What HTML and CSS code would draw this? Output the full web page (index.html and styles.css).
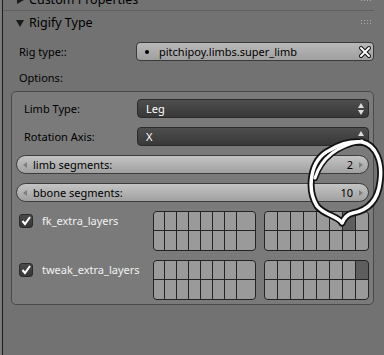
FILE: index.html
```html
<!DOCTYPE html>
<html lang="en">
<head>
  <meta charset="UTF-8">
  <title>Rigify Type</title>
  <link rel="stylesheet" href="styles.css">
</head>
<body>
  <div class="area">
    <div class="edge"></div>
    <div class="panels">
      <div class="panel-head cut">
        <svg class="tri" width="8" height="8" viewBox="0 0 8 8"><polygon points="1,0 8,4 1,8" fill="#1a1a1a"/></svg>
        <span class="title">Custom Properties</span>
        <svg class="grip" width="11" height="5" viewBox="0 0 11 5"><g fill="#aaa"><rect x="0" y="0" width="1" height="1"/><rect x="3" y="0" width="1" height="1"/><rect x="6" y="0" width="1" height="1"/><rect x="9" y="0" width="1" height="1"/><rect x="0" y="3" width="1" height="1"/><rect x="3" y="3" width="1" height="1"/><rect x="6" y="3" width="1" height="1"/><rect x="9" y="3" width="1" height="1"/></g></svg>
      </div>
      <div class="panel-head">
        <svg class="tri" width="8" height="8" viewBox="0 0 8 8"><polygon points="0,1 8,1 4,8" fill="#1a1a1a"/></svg>
        <span class="title">Rigify Type</span>
        <svg class="grip" width="11" height="5" viewBox="0 0 11 5"><g fill="#aaa"><rect x="0" y="0" width="1" height="1"/><rect x="3" y="0" width="1" height="1"/><rect x="6" y="0" width="1" height="1"/><rect x="9" y="0" width="1" height="1"/><rect x="0" y="3" width="1" height="1"/><rect x="3" y="3" width="1" height="1"/><rect x="6" y="3" width="1" height="1"/><rect x="9" y="3" width="1" height="1"/></g></svg>
      </div>

      <div class="prop-row rig">
        <span class="label">Rig type::</span>
        <div class="field">
          <span class="bullet"></span>
          <span class="value">pitchipoy.limbs.super_limb</span>
          <svg class="clear" width="14" height="14" viewBox="0 0 14 14">
            <path d="M3 3 L11 11 M11 3 L3 11" stroke="#111" stroke-width="4" stroke-linecap="round"/>
            <path d="M3 3 L11 11 M11 3 L3 11" stroke="#fff" stroke-width="2" stroke-linecap="round"/>
          </svg>
        </div>
      </div>
      <div class="prop-row options">
        <span class="label">Options:</span>
      </div>

      <div class="box">
        <div class="box-row">
          <span class="label">Limb Type:</span>
          <div class="menu">
            <span>Leg</span>
            <svg class="updown" width="6" height="12" viewBox="0 0 6 12"><polygon points="3,0 6,5 0,5" fill="#ddd"/><polygon points="0,7 6,7 3,12" fill="#ddd"/></svg>
          </div>
        </div>
        <div class="box-row">
          <span class="label">Rotation Axis:</span>
          <div class="menu">
            <span>X</span>
            <svg class="updown" width="6" height="12" viewBox="0 0 6 12"><polygon points="3,0 6,5 0,5" fill="#ddd"/><polygon points="0,7 6,7 3,12" fill="#ddd"/></svg>
          </div>
        </div>
        <div class="box-row">
          <div class="slider">
            <svg class="arr" width="4" height="6" viewBox="0 0 4 6"><polygon points="4,0 4,6 0,3" fill="#7d7d7d"/></svg>
            <span class="name">limb segments:</span>
            <span class="num">2</span>
            <svg class="arr" width="4" height="6" viewBox="0 0 4 6"><polygon points="0,0 4,3 0,6" fill="#7d7d7d"/></svg>
          </div>
        </div>
        <div class="box-row">
          <div class="slider">
            <svg class="arr" width="4" height="6" viewBox="0 0 4 6"><polygon points="4,0 4,6 0,3" fill="#7d7d7d"/></svg>
            <span class="name">bbone segments:</span>
            <span class="num">10</span>
            <svg class="arr" width="4" height="6" viewBox="0 0 4 6"><polygon points="0,0 4,3 0,6" fill="#7d7d7d"/></svg>
          </div>
        </div>

        <div class="layer-row">
          <div class="layer-left">
            <span class="check"><svg width="12" height="12" viewBox="0 0 12 12"><path d="M2.5 6 L5 9 L10 2" stroke="#fff" stroke-width="2" fill="none"/></svg></span>
            <span class="check-label">fk_extra_layers</span>
          </div>
          <div class="layers first">
            <i></i><i></i><i></i><i></i><i></i><i></i><i></i><i></i>
            <i></i><i></i><i></i><i></i><i></i><i></i><i></i><i></i>
          </div>
          <div class="layers second">
            <i></i><i></i><i></i><i></i><i></i><i></i><i class="on"></i><i></i>
            <i></i><i></i><i></i><i></i><i></i><i></i><i></i><i></i>
          </div>
        </div>
        <div class="layer-row">
          <div class="layer-left">
            <span class="check"><svg width="12" height="12" viewBox="0 0 12 12"><path d="M2.5 6 L5 9 L10 2" stroke="#fff" stroke-width="2" fill="none"/></svg></span>
            <span class="check-label">tweak_extra_layers</span>
          </div>
          <div class="layers first">
            <i></i><i></i><i></i><i></i><i></i><i></i><i></i><i></i>
            <i></i><i></i><i></i><i></i><i></i><i></i><i></i><i></i>
          </div>
          <div class="layers second">
            <i></i><i></i><i></i><i></i><i></i><i></i><i></i><i class="on"></i>
            <i></i><i></i><i></i><i></i><i></i><i></i><i></i><i></i>
          </div>
        </div>
      </div>
    </div>
  </div>

  <!-- hand drawn circle round the numbers -->
  <svg class="annot" width="384" height="355" viewBox="0 0 384 355">
    <g fill="none" stroke-linecap="round" stroke-linejoin="round">
      <path id="loop" d="M342 223 C338 216 324 215 317 206 C307 190 309 160 330 150 C340 144 352 141 362 142 C376 145 383 162 380 182 C378 199 369 210 353 213 C348 214 344 218 342 223" stroke="#111" stroke-width="7"/>
      <path d="M315 178 C322 156 340 145 362 141" stroke="#111" stroke-width="6"/>
      <path d="M342 223 C338 216 324 215 317 206 C307 190 309 160 330 150 C340 144 352 141 362 142 C376 145 383 162 380 182 C378 199 369 210 353 213 C348 214 344 218 342 223" stroke="#fff" stroke-width="3.5"/>
      <path d="M315 178 C322 156 340 145 362 141" stroke="#fff" stroke-width="3"/>
    </g>
  </svg>
</body>
</html>
```

FILE: styles.css
```css
body {
  margin: 0;
  width: 384px;
  height: 355px;
  overflow: hidden;
  position: relative;
  background-color: #727272;
  font-family: "Noto Sans", "Open Sans", sans-serif;
  font-size: 11px;
  color: #000;
}

.area {
  display: flex;
  height: 355px;
}

.edge {
  width: 3px;
  background-color: #7b7b7b;
  border-right: 1px solid #1c1c1c;
}

.panels {
  flex: 1;
  margin-top: -12px;
  padding-right: 10px;
}

.panel-head {
  height: 22px;
  display: flex;
  align-items: center;
  padding-left: 13px;
  padding-right: 2px;
  font-size: 12.5px;
}

.panel-head.cut {
  border-bottom: 1px solid #5f5f5f;
}

.panel-head .title {
  margin-left: 5px;
  flex: 1;
}

.panel-head .tri {
  margin-top: 1px;
}

.prop-row {
  display: flex;
  align-items: center;
  height: 19px;
  padding-left: 16px;
}

.prop-row.rig {
  margin-top: 9px;
}

.prop-row.options {
  margin-top: 7px;
}

.label {
  width: 117px;
  flex-shrink: 0;
}

.field {
  flex: 1;
  height: 19px;
  box-sizing: border-box;
  border: 1px solid #3a3a3a;
  border-radius: 4px;
  background: linear-gradient(#b9b9b9, #9f9f9f);
  display: flex;
  align-items: center;
  padding-left: 8px;
  padding-right: 1px;
}

.bullet {
  width: 4px;
  height: 4px;
  border-radius: 2px;
  background-color: #000;
}

.field .value {
  flex: 1;
  margin-left: 10px;
}

.box {
  margin-top: 4px;
  margin-left: 8px;
  border: 1px solid #4a4a4a;
  border-radius: 5px;
  background-color: #7a7a7a;
  padding: 7px 4px 4px 4px;
  display: flex;
  flex-direction: column;
  gap: 9px;
}

.box-row {
  display: flex;
  align-items: center;
  height: 19px;
}

.box-row .label {
  width: 121px;
  padding-left: 8px;
  box-sizing: border-box;
}

.menu {
  flex: 1;
  height: 19px;
  box-sizing: border-box;
  border: 1px solid #2b2b2b;
  border-radius: 4px;
  background: linear-gradient(#4e4e4e, #383838);
  color: #fff;
  display: flex;
  align-items: center;
  padding-left: 8px;
  padding-right: 4px;
}

.menu span {
  flex: 1;
}

.slider {
  flex: 1;
  height: 19px;
  box-sizing: border-box;
  border: 1px solid #3d3d3d;
  border-radius: 10px;
  background: linear-gradient(#c4c4c4, #a0a0a0);
  display: flex;
  align-items: center;
  padding: 0 5px 0 6px;
}

.slider .name {
  flex: 1;
  margin-left: 6px;
}

.slider .num {
  margin-right: 6px;
}

.layer-row {
  display: flex;
  height: 40px;
}

.layer-left {
  width: 137px;
  display: flex;
  align-items: flex-start;
  padding-left: 3px;
  padding-top: 3px;
  box-sizing: border-box;
}

.check {
  width: 14px;
  height: 14px;
  box-sizing: border-box;
  border: 1px solid #2a2a2a;
  border-radius: 3px;
  background: linear-gradient(#4a4a4a, #363636);
  display: flex;
  align-items: center;
  justify-content: center;
}

.check-label {
  margin-left: 9px;
  color: #f2f2f2;
  line-height: 14px;
}

.layers {
  display: grid;
  grid-template-rows: 18px 19px;
  gap: 1px;
  background-color: #242424;
  border: 1px solid #242424;
  border-radius: 4px;
  overflow: hidden;
}

.layers.first {
  grid-template-columns: 10px 11px 11px 11px 11px 11px 11px 18px;
}

.layers.second {
  margin-left: 8px;
  grid-template-columns: repeat(8, 12px);
}

.layers i {
  background-color: #9a9a9a;
}

.layers i.on {
  background-color: #5e5e5e;
}

.annot {
  position: absolute;
  top: 0;
  left: 0;
  pointer-events: none;
}
```
